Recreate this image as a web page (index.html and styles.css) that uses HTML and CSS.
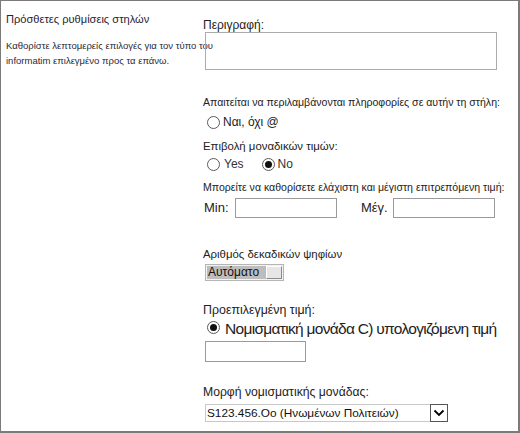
FILE: index.html
```html
<!DOCTYPE html>
<html lang="el">
<head>
<meta charset="utf-8">
<link rel="stylesheet" href="styles.css">
</head>
<body>
<div class="frame">
  <div class="left">
    <h2 class="title">Πρόσθετες ρυθμίσεις στηλών</h2>
    <p class="desc">Καθορίστε λεπτομερείς επιλογές για τον τύπο του<br>informatim επιλεγμένο προς τα επάνω.</p>
  </div>
  <div class="right">
    <label class="lbl lbl-desc">Περιγραφή:</label>
    <textarea class="area"></textarea>

    <div class="small req">Απαιτείται να περιλαμβάνονται πληροφορίες σε αυτήν τη στήλη:</div>
    <div class="radios r-req">
      <label class="opt"><input type="radio" class="radio" name="req"><span>Ναι, όχι @</span></label>
    </div>

    <div class="lbl lbl-uniq">Επιβολή μοναδικών τιμών:</div>
    <div class="radios r-uniq">
      <label class="opt"><input type="radio" class="radio" name="uniq"><span>Yes</span></label>
      <label class="opt opt-no"><input type="radio" class="radio" name="uniq" checked><span>No</span></label>
    </div>

    <div class="small minmax">Μπορείτε να καθορίσετε ελάχιστη και μέγιστη επιτρεπόμενη τιμή:</div>
    <div class="range">
      <span class="rl">Min:</span><input class="box box-min" type="text">
      <span class="rl rl-max">Μέγ.</span><input class="box box-max" type="text">
    </div>

    <div class="mid dec">Αριθμός δεκαδικών ψηφίων</div>
    <div class="auto"><span class="auto-val">Αυτόματο</span><span class="auto-btn"></span></div>

    <div class="mid def">Προεπιλεγμένη τιμή:</div>
    <div class="radios r-def">
      <label class="opt big"><input type="radio" class="radio" name="def" checked><span>Νομισματική μονάδα C) υπολογιζόμενη τιμή</span></label>
    </div>
    <input class="box box-def" type="text">

    <div class="lbl13 cur">Μορφή νομισματικής μονάδας:</div>
    <div class="sel">
      <span class="sel-val">S123.456.Oo (Ηνωμένων Πολιτειών)</span>
      <span class="sel-btn"><svg width="12" height="8" viewBox="0 0 12 8"><path d="M1.5 1.5 L6 6 L10.5 1.5" fill="none" stroke="#000" stroke-width="1.8"/></svg></span>
    </div>
  </div>
</div>
</body>
</html>
```

FILE: styles.css
```css
html, body {
  margin: 0;
  padding: 0;
  background: #fff;
}
body {
  font-family: "Liberation Sans", Arial, sans-serif;
  color: #222;
}
.frame {
  width: 520px;
  height: 433px;
  box-sizing: border-box;
  border-style: solid;
  border-color: #7b7b7b;
  border-width: 1px 2px 2px 1px;
  display: flex;
}
.left {
  width: 197px;
  padding: 11px 0 0 5px;
  flex: none;
}
.title {
  margin: 0;
  font-weight: normal;
  font-size: 11.1px;
  line-height: 15px;
  color: #2a2233;
  white-space: nowrap;
}
.desc {
  margin: 11px 0 0 0;
  font-size: 9.5px;
  line-height: 15px;
  color: #1f2a3a;
  white-space: nowrap;
}
.right {
  display: flex;
  flex-direction: column;
  align-items: flex-start;
  padding-top: 18px;
  width: 310px;
  white-space: nowrap;
}
.lbl {
  font-size: 12px;
  line-height: 12px;
}
.small {
  font-size: 10.55px;
  line-height: 13px;
}
.mid {
  font-size: 11.4px;
  line-height: 13px;
}
.lbl13 {
  font-size: 12.2px;
  line-height: 15px;
}
.area {
  margin: 1px 0 0 2px;
  width: 292px;
  height: 38px;
  box-sizing: border-box;
  border: 1px solid #ababab;
  background: transparent;
  resize: none;
  padding: 0;
}
.req { margin-top: 26px; }
.radios {
  display: flex;
  align-items: center;
  height: 16px;
}
.r-req { margin-top: 5px; }
.opt {
  display: flex;
  align-items: center;
  font-size: 12px;
  line-height: 16px;
}
.radio {
  appearance: none;
  -webkit-appearance: none;
  width: 13px;
  height: 13px;
  margin: 0 3px 0 4px;
  border: 1px solid #5a5a5a;
  border-radius: 50%;
  box-sizing: border-box;
  background: #fff;
  display: grid;
  place-content: center;
}
.radio:checked::before {
  content: "";
  width: 7px;
  height: 7px;
  border-radius: 50%;
  background: #111;
}
.lbl-uniq {
  margin-top: 9px;
  line-height: 14px;
  font-size: 11.4px;
}
.r-uniq { margin-top: 3px; }
.r-uniq .opt { color: #333; }
.r-uniq .opt:first-child span { margin-left: 1px; }
.opt-no { margin-left: 14px; }
.minmax { margin-top: 9px; }
.range {
  display: flex;
  align-items: center;
  margin-top: 4px;
  height: 20px;
}
.rl {
  font-size: 13px;
  line-height: 16px;
  padding-left: 1px;
  width: 31px;
}
.rl-max {
  width: 32px;
  margin-left: 23px;
}
.box {
  box-sizing: border-box;
  width: 102px;
  height: 20px;
  border: 1px solid #9a9a9a;
  padding: 0;
  margin: 0;
}
.dec { margin-top: 30px; }
.def {
  margin-top: 23px;
  font-size: 12.4px;
}
.auto {
  margin: 3px 0 0 2px;
  width: 79px;
  height: 17px;
  box-sizing: border-box;
  border: 1px solid #b5b5b5;
  background: #f2f2f2;
  display: flex;
  padding: 1px;
}
.auto-val {
  flex: 1;
  background: #bdbdbd;
  font-size: 12px;
  line-height: 13px;
  padding-left: 1px;
  color: #111;
}
.auto-btn {
  width: 16px;
  border: 1px solid #8a8a8a;
  border-left-color: #fff;
  border-top-color: #fff;
  background: #e6e6e6;
  box-sizing: border-box;
}
.r-def {
  margin-top: 3px;
  height: 18px;
  align-items: flex-start;
}
.big {
  font-size: 15.5px;
  line-height: 18px;
  letter-spacing: -0.7px;
  align-items: flex-start;
}
.big .radio { margin-top: 1px; }
.big span { margin-left: 2px; }
.box-def {
  margin: 3px 0 0 2px;
  height: 21px;
  width: 101px;
}
.cur { margin-top: 23px; }
.sel {
  margin: 4px 0 0 2px;
  width: 243px;
  height: 18px;
  box-sizing: border-box;
  border: 1px solid #c8c8c8;
  display: flex;
  align-items: stretch;
}
.sel-val {
  flex: 1;
  font-size: 11.8px;
  line-height: 16px;
  padding-left: 1px;
  color: #111;
}
.sel-btn {
  width: 18px;
  border: 1px solid #555;
  box-sizing: border-box;
  display: flex;
  align-items: center;
  justify-content: center;
  margin: -1px -1px -1px 0;
  height: 18px;
}
```
